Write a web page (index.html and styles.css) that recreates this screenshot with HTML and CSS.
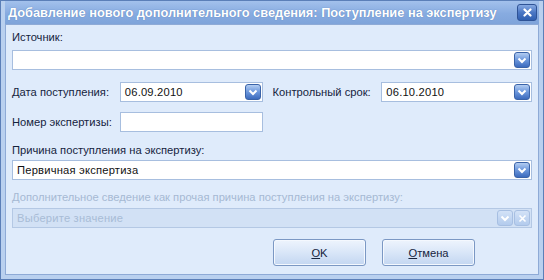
FILE: index.html
```html
<!DOCTYPE html>
<html>
<head>
  <title>Поступление на экспертизу</title>
  <meta charset="utf-8">
  <link rel="stylesheet" href="styles.css">
</head>
<body>
<div class="window">
  <div class="titlebar">
    <span class="title">Добавление нового дополнительного сведения: Поступление на экспертизу</span>
    <span class="close-btn">
      <svg width="9" height="9" viewBox="0 0 9 9"><path d="M1.5 1.5 L7.5 7.5 M7.5 1.5 L1.5 7.5" stroke="#fff" stroke-width="2.2" stroke-linecap="round"/></svg>
    </span>
  </div>

  <div class="content">
    <div class="label label-source">Источник:</div>
    <div class="field field-full">
      <span class="value"></span>
      <span class="drop"><svg width="10" height="7" viewBox="0 0 10 7"><path d="M1.5 1.5 L5 5 L8.5 1.5" stroke="#fff" stroke-width="2" fill="none"/></svg></span>
    </div>

    <div class="row row-dates">
      <span class="label label-left">Дата поступления:</span>
      <div class="field field-date">
        <span class="value">06.09.2010</span>
        <span class="drop"><svg width="10" height="7" viewBox="0 0 10 7"><path d="M1.5 1.5 L5 5 L8.5 1.5" stroke="#fff" stroke-width="2" fill="none"/></svg></span>
      </div>
      <span class="label label-control">Контрольный срок:</span>
      <div class="field field-date2">
        <span class="value">06.10.2010</span>
        <span class="drop"><svg width="10" height="7" viewBox="0 0 10 7"><path d="M1.5 1.5 L5 5 L8.5 1.5" stroke="#fff" stroke-width="2" fill="none"/></svg></span>
      </div>
    </div>

    <div class="row row-number">
      <span class="label label-left">Номер экспертизы:</span>
      <div class="field field-date"><span class="value"></span></div>
    </div>

    <div class="label label-reason">Причина поступления на экспертизу:</div>
    <div class="field field-full">
      <span class="value">Первичная экспертиза</span>
      <span class="drop"><svg width="10" height="7" viewBox="0 0 10 7"><path d="M1.5 1.5 L5 5 L8.5 1.5" stroke="#fff" stroke-width="2" fill="none"/></svg></span>
    </div>

    <div class="label label-disabled">Дополнительное сведение как прочая причина поступления на экспертизу:</div>
    <div class="field field-full field-disabled">
      <span class="value">Выберите значение</span>
      <span class="drop"><svg width="10" height="7" viewBox="0 0 10 7"><path d="M1.5 1.5 L5 5 L8.5 1.5" stroke="#fff" stroke-width="2" fill="none"/></svg></span>
      <span class="drop clear"><svg width="9" height="9" viewBox="0 0 9 9"><path d="M1.5 1.5 L7.5 7.5 M7.5 1.5 L1.5 7.5" stroke="#fff" stroke-width="1.6"/></svg></span>
    </div>

    <div class="buttons">
      <button class="btn"><u>O</u>K</button>
      <button class="btn"><u>О</u>тмена</button>
    </div>
  </div>
</div>
</body>
</html>
```

FILE: styles.css
```css
body {
  margin: 0;
  font-family: "Liberation Sans", Arial, sans-serif;
  font-size: 11px;
}

.window {
  width: 544px;
  height: 280px;
  box-sizing: border-box;
  border: 1px solid #5b7fb8;
  background-color: #b9d0ef;
  padding: 0 4px 4px 4px;
  display: flex;
  flex-direction: column;
}

.titlebar {
  height: 23px;
  display: flex;
  align-items: center;
  justify-content: space-between;
  padding: 0 2px 0 3px;
  background: linear-gradient(#a3c1ec, #87abe0 55%, #7fa4da);
}

.title {
  color: white;
  font-weight: bold;
  font-size: 12.8px;
  white-space: nowrap;
  text-shadow: 0 0 1px #4d72ad;
}

.close-btn {
  width: 20px;
  height: 17px;
  box-sizing: border-box;
  border: 1px solid #2f5396;
  border-radius: 3px;
  background: linear-gradient(#86a9e2, #4b77c4 50%, #2f5fb0);
  display: flex;
  align-items: center;
  justify-content: center;
}

.content {
  flex: 1;
  background-color: #dfebfb;
  border: 1px solid #8eaad6;
  padding: 6px 6px 0 6px;
}

.label {
  color: #15233d;
  height: 13px;
  line-height: 13px;
  font-size: 11.2px;
  white-space: nowrap;
}

.label-reason {
  margin-top: 12px;
}

.label-disabled {
  margin-top: 11px;
  color: #a6b9d3;
}

.field {
  position: relative;
  height: 20px;
  box-sizing: border-box;
  border: 1px solid #a7bedf;
  background-color: white;
  display: flex;
  align-items: center;
  padding-left: 4px;
  font-size: 11.2px;
  color: #111;
}

.field-full {
  margin-top: 6px;
}

.label-reason + .field-full {
  margin-top: 3px;
}

.label-disabled + .field-full {
  margin-top: 4px;
}

.value {
  flex: 1;
}

.drop {
  width: 16px;
  height: 16px;
  margin-right: 1px;
  box-sizing: border-box;
  border: 1px solid #3a63a8;
  border-radius: 3px;
  background: linear-gradient(#b3cdf2, #6c97dc 50%, #3c6bbd);
  display: flex;
  align-items: center;
  justify-content: center;
}

.field-disabled {
  background-color: #d2e1f5;
  border-color: #b4c8e4;
  color: #a8bcd6;
}

.field-disabled .drop {
  border-color: #a7bfe2;
  background: linear-gradient(#d3e2f7, #b3cbed);
  margin-right: 0;
}

.field-disabled .clear {
  margin-right: 1px;
  margin-left: 1px;
}

.row {
  display: flex;
  align-items: center;
  height: 20px;
}

.row-dates {
  margin-top: 12px;
}

.row-number {
  margin-top: 10px;
}

.label-left {
  width: 108px;
}

.field-date {
  width: 143px;
}

.label-control {
  margin-left: 10px;
  width: 109px;
}

.field-date2 {
  width: 151px;
}

.value {
  letter-spacing: 0.2px;
}

.buttons {
  display: flex;
  justify-content: flex-end;
  gap: 16px;
  margin-top: 11px;
  padding-right: 57px;
}

.btn {
  width: 93px;
  height: 27px;
  border: 1px solid #7b98c4;
  border-radius: 3px;
  background: linear-gradient(#eef4fd, #d9e6f8 50%, #c3d6f1);
  box-shadow: inset 0 0 0 1px #f4f8fe;
  font-family: "Liberation Sans", Arial, sans-serif;
  font-size: 11.2px;
  color: #15233d;
  padding: 0;
}
```
